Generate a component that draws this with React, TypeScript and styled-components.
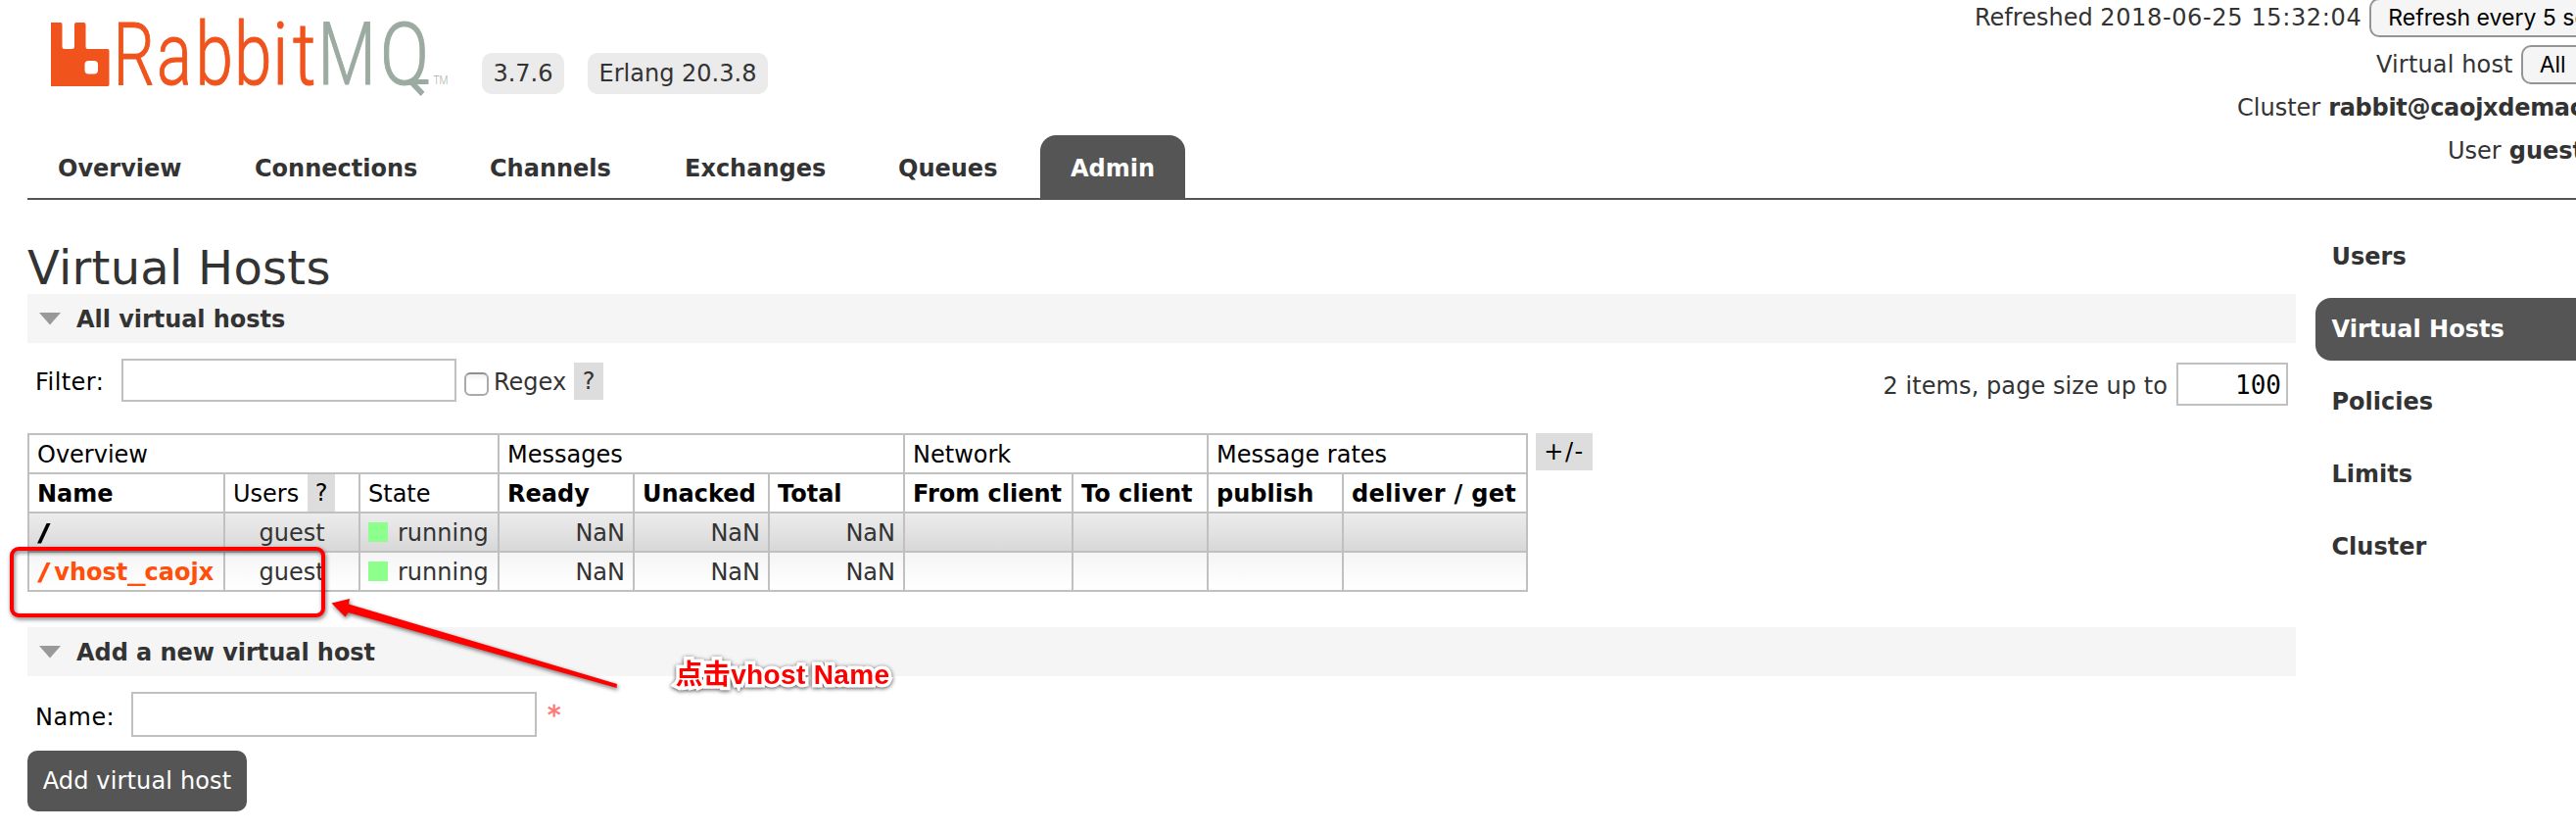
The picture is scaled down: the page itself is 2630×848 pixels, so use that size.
import React from "react";
import styled, { createGlobalStyle, css } from "styled-components";

const sans = `"DejaVu Sans", Verdana, sans-serif`;

const GlobalStyle = createGlobalStyle`
  html, body { margin: 0; padding: 0; background: #fff; overflow: hidden; }
  *, *::before, *::after { box-sizing: border-box; }
`;

const Page = styled.div`
  position: relative;
  width: 2630px;
  height: 848px;
  overflow: hidden;
  padding-left: 28px;
  background: #fff;
  color: #333;
  font-family: ${sans};
  font-size: 24px;
  white-space: nowrap;
`;

/* ---------- header ---------- */

const Header = styled.header`
  height: 204px;
  border-bottom: 2px solid #555;
`;

const TopRow = styled.div`
  display: flex;
  align-items: flex-start;
  height: 138px;
`;

const LogoBox = styled.svg`
  flex: none;
  margin: 0 14px 0 22px;
  overflow: visible;
`;

const Version = styled.span<{ $width: number }>`
  flex: none;
  width: ${(p) => p.$width}px;
  height: 42px;
  margin: 54px 24px 0 0;
  border-radius: 10px;
  background: #ebebeb;
  line-height: 42px;
  text-align: center;
`;

const Status = styled.div`
  flex: none;
  width: 614px;
  margin: -6px 0 0 auto;
`;

const StatusRow = styled.div<{ $indent: number; $height: number; $lift?: number }>`
  display: flex;
  align-items: center;
  gap: 8px;
  height: ${(p) => p.$height}px;
  margin-top: ${(p) => -(p.$lift ?? 0)}px;
  padding-left: ${(p) => p.$indent}px;
  line-height: ${(p) => p.$height}px;
`;

const Tracked = styled.span<{ $by: number; $strong?: boolean }>`
  font-weight: ${(p) => (p.$strong ? "bold" : "inherit")};
  letter-spacing: ${(p) => p.$by}px;
`;

const Picker = styled.div<{ $width: number }>`
  flex: none;
  width: ${(p) => p.$width}px;
  height: 40px;
  padding-left: 17px;
  border: 2px solid #949494;
  border-radius: 10px;
  background: #f5f5f5;
  color: #000;
  font-family: Inter, "Liberation Sans", sans-serif;
  font-size: 23px;
  line-height: 37px;
`;

const Tabs = styled.nav`
  display: flex;
  gap: 14px;
`;

const Tab = styled.a<{ $active?: boolean; $width: number }>`
  flex: none;
  width: ${(p) => p.$width}px;
  height: 64px;
  padding: 4px 0 0 31px;
  border-radius: 16px 16px 0 0;
  font-weight: bold;
  line-height: 60px;
  ${(p) =>
    p.$active &&
    css`
      background: #555;
      color: #fff;
    `}
`;

/* ---------- body ---------- */

const Body = styled.div`
  display: flex;
`;

const Main = styled.main`
  flex: none;
  width: 2316px;
`;

const Title = styled.h1`
  margin: 0;
  padding-top: 43px;
  height: 96px;
  font-size: 48px;
  font-weight: normal;
  letter-spacing: 0.25px;
  line-height: 53px;
`;

const SectionBar = styled.h2`
  display: flex;
  align-items: center;
  gap: 15px;
  height: 50px;
  margin: 0;
  padding-left: 11px;
  background: #f5f5f5;
  font-size: 24px;
  font-weight: bold;
  letter-spacing: -0.05px;
  line-height: 50px;
`;

const SectionText = styled.span`
  padding-top: 1px;
`;

const FilterRow = styled.div`
  display: flex;
  align-items: flex-start;
  height: 92px;
  padding: 16px 8px 0 8px;
  line-height: 48px;
`;

const Label = styled.label<{ $width: number }>`
  flex: none;
  width: ${(p) => p.$width}px;
  color: #000;
  letter-spacing: 0.45px;
`;

const CheckLabel = styled.label`
  flex: none;
  width: 82px;
  color: #333;
`;

const Field = styled.input<{ $width: number; $height: number; $mono?: boolean }>`
  flex: none;
  width: ${(p) => p.$width}px;
  height: ${(p) => p.$height}px;
  margin: 0;
  padding: 2px 5px 0;
  border: 2px solid #c0c0c0;
  border-radius: 0;
  background: #fff;
  color: #000;
  font-family: ${(p) => (p.$mono ? `"DejaVu Sans Mono", monospace` : sans)};
  font-size: ${(p) => (p.$mono ? 26 : 24)}px;
  text-align: ${(p) => (p.$mono ? "right" : "left")};
  outline: none;
`;

const Check = styled.span`
  flex: none;
  width: 25px;
  height: 24px;
  margin: 14px 5px 0 8px;
  border: 2px solid #aaa;
  border-top-color: #8f8f8f;
  border-radius: 6px;
  background: linear-gradient(#f0f0f0, #fff 35%);
`;

const HelpBox = styled.span<{ $width: number; $top?: number }>`
  flex: none;
  display: block;
  width: ${(p) => p.$width}px;
  height: 38px;
  margin-top: ${(p) => p.$top ?? 0}px;
  background: #ddd;
  line-height: 38px;
  text-align: center;
`;

const ColumnsBox = styled(HelpBox)`
  color: #000;
  letter-spacing: 1.6px;
`;

const Paging = styled.div`
  display: flex;
  align-items: flex-start;
  gap: 9px;
  margin: 4px 0 0 auto;
`;

const TableRow = styled.div`
  display: flex;
  align-items: flex-start;
  gap: 8px;
  margin-bottom: 36px;
`;

const Table = styled.table`
  table-layout: fixed;
  width: 1532px;
  border-collapse: separate;
  border-spacing: 0;
  border-top: 2px solid #c0c0c0;
  border-left: 2px solid #c0c0c0;
`;

const Col = styled.col<{ $width: number }>`
  width: ${(p) => p.$width}px;
`;

const cell = css`
  height: 40px;
  padding: 2px 8px 0;
  border-right: 2px solid #c0c0c0;
  border-bottom: 2px solid #c0c0c0;
  font-size: 24px;
  line-height: 36px;
`;

const Th = styled.th<{ $strong?: boolean }>`
  ${cell}
  color: #000;
  font-weight: ${(p) => (p.$strong ? "bold" : "normal")};
  text-align: left;
`;

const HelpTh = styled(Th)`
  padding-top: 0;
`;

const HelpThInner = styled.div`
  display: flex;
  gap: 9px;
  line-height: 40px;
  height: 38px;
`;

const Td = styled.td<{ $align?: "left" | "center" | "right"; $dark?: boolean }>`
  ${cell}
  background: ${(p) =>
    p.$dark ? "linear-gradient(#ececec, #d8d8d8)" : "linear-gradient(#f5f5f5, #fff)"};
  background-clip: padding-box;
  text-align: ${(p) => p.$align ?? "left"};
`;

const VhostLink = styled.a<{ $hot?: boolean }>`
  color: ${(p) => (p.$hot ? "#ff4f0a" : "#000")};
  font-weight: bold;
`;

const Wide = styled.span`
  display: inline-block;
  width: 17.3px;
  transform: scaleX(1.55);
  transform-origin: left;
`;

const State = styled.div`
  display: flex;
  align-items: center;
  gap: 10px;
`;

const Swatch = styled.span`
  width: 20px;
  height: 20px;
  margin-bottom: 2px;
  background: #8cff8c;
`;

const AddRow = styled.div`
  display: flex;
  align-items: flex-start;
  height: 76px;
  padding: 16px 0 0 8px;
  line-height: 52px;
`;

const Required = styled.span`
  margin-left: 11px;
  color: #ff7777;
  font-size: 27px;
  line-height: 48px;
  -webkit-text-stroke: 0.7px #ff7777;
`;

const AddButton = styled.button`
  width: 224px;
  height: 62px;
  padding: 1px 0 0;
  border: 0;
  border-radius: 10px;
  background: #555;
  color: #fff;
  font-family: ${sans};
  font-size: 24px;
  letter-spacing: 0.15px;
  line-height: 61px;
  text-align: center;
`;

const Side = styled.aside`
  flex: none;
  display: flex;
  flex-direction: column;
  gap: 10px;
  width: 280px;
  margin-left: 20px;
  padding-top: 26px;
`;

const SideLink = styled.a<{ $active?: boolean }>`
  height: 64px;
  padding: 1px 0 0 16.5px;
  border-radius: 16px 0 0 16px;
  font-weight: bold;
  line-height: 63px;
  ${(p) =>
    p.$active &&
    css`
      background: #555;
      color: #fff;
    `}
`;

/* ---------- annotations drawn over the page ---------- */

const Marker = styled.div`
  position: absolute;
  left: 10px;
  top: 558px;
  width: 322px;
  height: 72px;
  border: 4px solid #f00;
  border-radius: 9px;
  filter: drop-shadow(1px 2px 2px rgba(0, 0, 0, 0.55));
`;

const Arrow = styled.svg`
  position: absolute;
  left: 330px;
  top: 600px;
  filter: drop-shadow(1px 2px 2px rgba(0, 0, 0, 0.55));
`;

const Note = styled.div`
  position: absolute;
  left: 689.5px;
  top: 669px;
  color: #f00;
  font-family: "Liberation Sans", "Noto Sans CJK SC", sans-serif;
  font-size: 28px;
  font-weight: bold;
  letter-spacing: 0.35px;
  line-height: 40px;
  -webkit-text-stroke: 7px #fff;
  paint-order: stroke fill;
  filter: drop-shadow(0 1px 2px rgba(0, 0, 0, 0.7));
`;

const ORANGE = "#f0531c";
const GREY = "#9caba2";

/* The wordmark's letters: x, horizontal squeeze, colour. */
const WORDMARK: [string, number, number, string][] = [
  ["R", 115.5, 0.75, ORANGE],
  ["a", 160, 0.75, ORANGE],
  ["b", 199.5, 0.78, ORANGE],
  ["b", 239, 0.78, ORANGE],
  ["i", 278, 0.82, ORANGE],
  ["t", 299, 0.82, ORANGE],
  ["M", 324.5, 0.77, GREY],
  ["Q", 388, 0.83, GREY],
];

const Logo = () => (
  <LogoBox width="428" height="120" viewBox="50 0 428 120">
    <path
      fill={ORANGE}
      d="M52 23H62Q63.500 23 63.500 25V47.500Q63.500 50 66 50H73.500Q76 50 76 47.500V25Q76 23 78 23H85.500Q87.500 23 87.500 25V48Q87.500 50 89.500 50H110Q111.500 50 111.500 52V86Q111.500 88 110 88H52ZM90.500 62Q86.500 62 86.500 66V71.500Q86.500 75.500 90.500 75.500H96Q100 75.500 100 71.500V66Q100 62 96 62Z"
    />
    <g fontFamily="Roboto, sans-serif" fontWeight="300" fontSize="89" strokeWidth="1.1">
      {WORDMARK.map(([ch, x, squeeze, fill], i) => (
        <text key={i} transform={`translate(${x} 85.5) scale(${squeeze} 1)`} fill={fill} stroke={fill}>
          {ch}
        </text>
      ))}
    </g>
    <path d="M418 83.500H437.500" stroke={GREY} strokeWidth="5" />
    <text
      x="442.5"
      y="85.5"
      fontFamily="Roboto, sans-serif"
      fontWeight="300"
      fontSize="13"
      textLength="15"
      lengthAdjust="spacingAndGlyphs"
      fill="#a5b0a9"
    >
      TM
    </text>
  </LogoBox>
);

const Triangle = () => (
  <svg width="24" height="14" viewBox="0 0 24 14">
    <path d="M1 1H23L12 13.500Z" fill="#999" />
  </svg>
);

const TABS = [
  { name: "Overview", width: 187 },
  { name: "Connections", width: 226 },
  { name: "Channels", width: 185 },
  { name: "Exchanges", width: 204 },
  { name: "Queues", width: 162 },
  { name: "Admin", width: 148 },
];

const SIDE_LINKS = ["Users", "Virtual Hosts", "Policies", "Limits", "Cluster"];

const COLS = [200, 138, 142, 138, 138, 138, 172, 138, 138, 188];

export default function App() {
  return (
    <Page>
      <GlobalStyle />
      <Header>
        <TopRow>
          <Logo />
          <Version $width={84}>3.7.6</Version>
          <Version $width={184}>Erlang 20.3.8</Version>
          <Status>
            <StatusRow $indent={0} $height={48}>
              <span>
                Refreshed <Tracked $by={0.64}>2018-06-25 15:32:04</Tracked>
              </span>
              <Picker $width={300}>Refresh every 5 seconds</Picker>
            </StatusRow>
            <StatusRow $indent={410} $height={48}>
              <Tracked $by={0.15}>Virtual host</Tracked>
              <Picker $width={90}>All</Picker>
            </StatusRow>
            <StatusRow $indent={268} $height={44} $lift={2}>
              <span>Cluster</span>
              <Tracked $by={-0.3} $strong>
                rabbit@caojxdemac
              </Tracked>
            </StatusRow>
            <StatusRow $indent={483} $height={44}>
              <span>User</span>
              <b>guest</b>
            </StatusRow>
          </Status>
        </TopRow>
        <Tabs>
          {TABS.map((t) => (
            <Tab key={t.name} $width={t.width} $active={t.name === "Admin"}>
              {t.name}
            </Tab>
          ))}
        </Tabs>
      </Header>
      <Body>
        <Main>
          <Title>Virtual Hosts</Title>
          <SectionBar>
            <Triangle />
            <SectionText>All virtual hosts</SectionText>
          </SectionBar>
          <FilterRow>
            <Label $width={88}>Filter:</Label>
            <Field $width={342} $height={44} />
            <Check />
            <CheckLabel>Regex</CheckLabel>
            <HelpBox $width={30} $top={4}>
              ?
            </HelpBox>
            <Paging>
              <Tracked $by={0.07}>2 items, page size up to</Tracked>
              <Field $width={114} $height={44} $mono defaultValue="100" />
            </Paging>
          </FilterRow>
          <TableRow>
            <Table>
              <colgroup>
                {COLS.map((w, i) => (
                  <Col key={i} $width={w} />
                ))}
              </colgroup>
              <thead>
                <tr>
                  <Th colSpan={3}>Overview</Th>
                  <Th colSpan={3}>Messages</Th>
                  <Th colSpan={2}>Network</Th>
                  <Th colSpan={2}>Message rates</Th>
                </tr>
                <tr>
                  <Th $strong>Name</Th>
                  <HelpTh>
                    <HelpThInner>
                      Users
                      <HelpBox $width={28}>?</HelpBox>
                    </HelpThInner>
                  </HelpTh>
                  <Th>State</Th>
                  <Th $strong>Ready</Th>
                  <Th $strong>Unacked</Th>
                  <Th $strong>Total</Th>
                  <Th $strong>From client</Th>
                  <Th $strong>To client</Th>
                  <Th $strong>publish</Th>
                  <Th $strong>
                    <Tracked $by={0.3}>deliver / get</Tracked>
                  </Th>
                </tr>
              </thead>
              <tbody>
                {[false, true].map((hot) => (
                  <tr key={String(hot)}>
                    <Td $dark={!hot}>
                      <VhostLink $hot={hot}>
                        <Wide>/</Wide>
                        {hot && (
                          <>
                            vhost<Wide>_</Wide>caojx
                          </>
                        )}
                      </VhostLink>
                    </Td>
                    <Td $dark={!hot} $align="center">
                      guest
                    </Td>
                    <Td $dark={!hot}>
                      <State>
                        <Swatch />
                        running
                      </State>
                    </Td>
                    {[0, 1, 2].map((n) => (
                      <Td key={n} $dark={!hot} $align="right">
                        NaN
                      </Td>
                    ))}
                    {[0, 1, 2, 3].map((n) => (
                      <Td key={n} $dark={!hot} />
                    ))}
                  </tr>
                ))}
              </tbody>
            </Table>
            <ColumnsBox $width={58}>+/-</ColumnsBox>
          </TableRow>
          <SectionBar>
            <Triangle />
            <SectionText>Add a new virtual host</SectionText>
          </SectionBar>
          <AddRow>
            <Label $width={98}>Name:</Label>
            <Field $width={414} $height={46} />
            <Required>*</Required>
          </AddRow>
          <AddButton>Add virtual host</AddButton>
        </Main>
        <Side>
          {SIDE_LINKS.map((s) => (
            <SideLink key={s} $active={s === "Virtual Hosts"}>
              {s}
            </SideLink>
          ))}
        </Side>
      </Body>
      <Marker />
      <Arrow width="310" height="110" viewBox="330 600 310 110">
        <path d="M338.500 615.500L357 611L356 616.500L630 698L629.500 702L355.500 625L352.500 629.500Z" fill="#f00" />
      </Arrow>
      <Note>点击vhost Name</Note>
    </Page>
  );
}
